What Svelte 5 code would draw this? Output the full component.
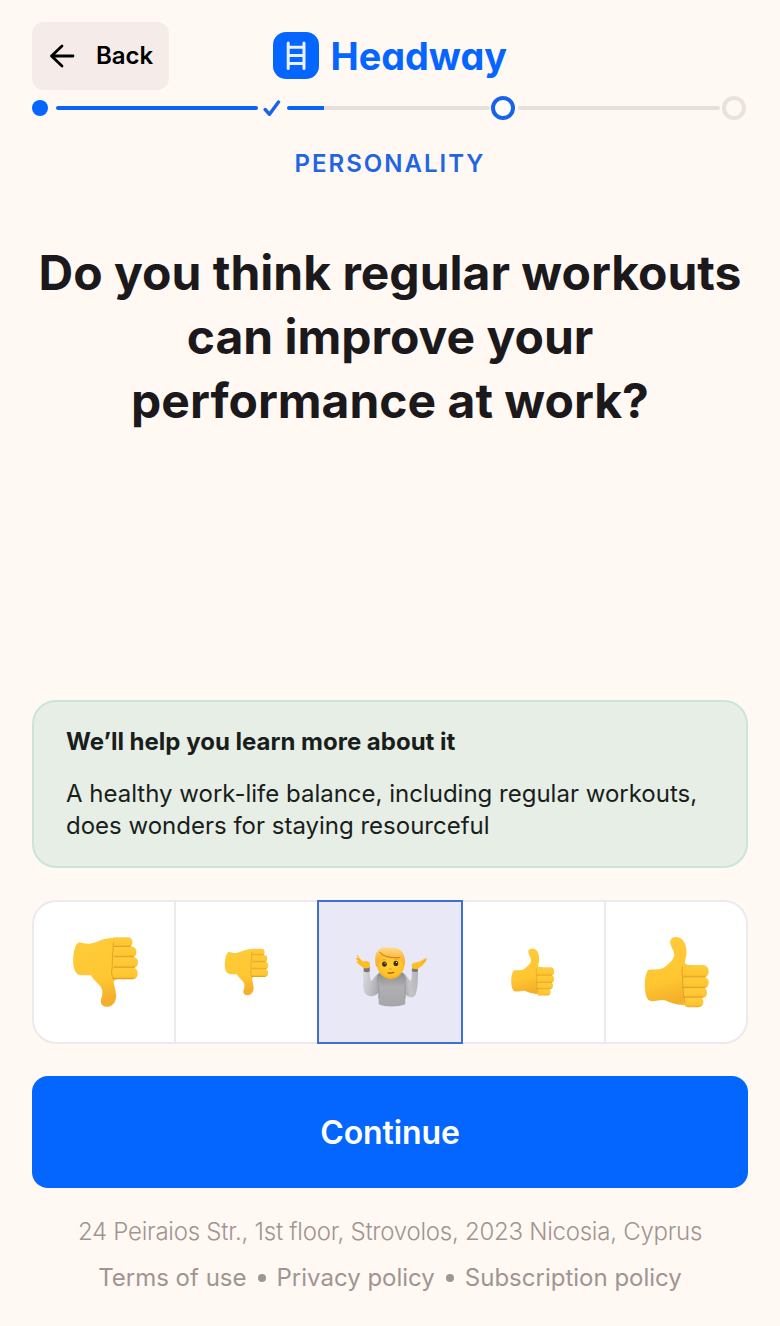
<script>
  let selected = 2;

  const answers = [
    { label: "Strongly disagree", icon: "down", size: "big" },
    { label: "Disagree", icon: "down", size: "small" },
    { label: "Not sure", icon: "shrug", size: "big" },
    { label: "Agree", icon: "up", size: "small" },
    { label: "Strongly agree", icon: "up", size: "big" },
  ];

  const links = ["Terms of use", "Privacy policy", "Subscription policy"];
</script>

<svg class="defs" width="0" height="0" aria-hidden="true">
  <defs>
    <linearGradient id="skin" x1="0" y1="0" x2="0.2" y2="1">
      <stop offset="0" stop-color="#ffcc3a" />
      <stop offset="0.7" stop-color="#ffc631" />
      <stop offset="1" stop-color="#f4b02a" />
    </linearGradient>
    <linearGradient id="finger" x1="0" y1="0" x2="0" y2="1">
      <stop offset="0" stop-color="#ffcd3d" />
      <stop offset="0.75" stop-color="#ffc530" />
      <stop offset="1" stop-color="#efac27" />
    </linearGradient>
    <radialGradient id="face" cx="0.5" cy="0.45" r="0.6">
      <stop offset="0" stop-color="#ffd23a" />
      <stop offset="0.7" stop-color="#fec22a" />
      <stop offset="1" stop-color="#f0a01a" />
    </radialGradient>
    <linearGradient id="hair" x1="0" y1="0" x2="0" y2="1">
      <stop offset="0" stop-color="#ffdc86" />
      <stop offset="0.5" stop-color="#fdbb48" />
      <stop offset="1" stop-color="#f6aa2c" />
    </linearGradient>
    <linearGradient id="shirt" x1="0" y1="0" x2="0" y2="1">
      <stop offset="0" stop-color="#88888c" />
      <stop offset="0.45" stop-color="#b0b0b3" />
      <stop offset="1" stop-color="#a6a6a8" />
    </linearGradient>
    <linearGradient id="sleeve-left" x1="0" y1="0" x2="1" y2="0.2">
      <stop offset="0" stop-color="#dcdce0" />
      <stop offset="0.5" stop-color="#bdbdc1" />
      <stop offset="1" stop-color="#98989c" />
    </linearGradient>
    <linearGradient id="sleeve-right" x1="1" y1="0" x2="0" y2="0.2">
      <stop offset="0" stop-color="#b4b4b8" />
      <stop offset="0.5" stop-color="#c4c4c8" />
      <stop offset="1" stop-color="#98989c" />
    </linearGradient>
  </defs>
</svg>

<main>
  <header>
    <button class="back">
      <svg width="26" height="26" viewBox="0 0 26 26">
        <path d="M24 13H2.500M13 3L2.500 13L13 23" />
      </svg>
      Back
    </button>
    <div class="logo">
      <svg width="236" height="56" viewBox="0 0 236 56">
        <rect x="1" y="4" width="46" height="47" rx="13" fill="#0466ff" />
        <path
          d="M16.200 15V40.500M32 15V40.500M16.200 19.200H32M16.200 27.500H32M16.200 35.500H32"
          class="ladder"
        />
        <text x="58.500" y="42" textLength="176.500" lengthAdjust="spacingAndGlyphs">Headway</text>
      </svg>
    </div>
  </header>

  <div class="progress">
    <span class="dot"></span>
    <span class="track done"></span>
    <svg class="check" width="18" height="18" viewBox="0 0 18 18">
      <path d="M2.200 10.500L6.500 15.300L15.500 3" />
    </svg>
    <span class="track"><span class="fill" style="width: 18%"></span></span>
    <span class="ring current"></span>
    <span class="track"></span>
    <span class="ring"></span>
  </div>

  <p class="category">PERSONALITY</p>
  <h1>Do you think regular workouts can improve your performance at work?</h1>

  <section class="hint">
    <h2>We’ll help you learn more about it</h2>
    <p>A healthy work-life balance, including regular workouts, does wonders for staying resourceful</p>
  </section>

  <div class="answers">
    {#each answers as answer, i}
      <button
        class="answer"
        class:active={selected === i}
        aria-label={answer.label}
        on:click={() => (selected = i)}
      >
        {#if answer.icon === "down"}
          <svg class="thumb {answer.size}" viewBox="38 36 202 216">
            <path
              d="M61 54C72 56 84 61 98 57C116 53 131 43 151 42L176 43L180 161L164 171C163 184 171 198 171 216C171 236 158 249 142 249C126 248 122 236 127 222C133 204 129 193 119 182C110 172 101 165 95 154C82 153 70 156 59 152C44 146 40 125 42 98C44 75 49 56 61 54Z"
              fill="url(#skin)"
            />
            <rect x="155" y="39" width="65" height="30" rx="13" fill="url(#finger)" />
            <rect x="155" y="67" width="77" height="33" rx="15" fill="url(#finger)" />
            <rect x="155" y="98" width="82" height="34" rx="16" fill="url(#finger)" />
            <rect x="155" y="130" width="81" height="36" rx="16" fill="url(#finger)" />
            <path d="M164 67H214M161 98H224M161 130H226M162 164H222" class="crease" />
            <path d="M153 42C145 55 151 72 149 86C147 108 153 124 150 142L164 154V43Z" fill="#ffc834" />
            <path d="M163 56C160 64 164 74 161 84C159 100 160 118 159 132C156 144 157 156 163 164" class="crease" />
          </svg>
        {:else if answer.icon === "up"}
          <svg class="thumb {answer.size}" viewBox="28 35 202 216">
            <path
              d="M43 137C58 133 73 138 87 132C102 122 119 108 122 93C124 79 109 66 110 50C112 38 125 35 137 39C153 44 161 68 159 89C158 104 151 116 157 123L178 124L176 242C151 245 116 240 97 229C81 223 66 234 49 230C31 225 28 159 43 137Z"
              fill="url(#skin)"
            />
            <rect x="145" y="122" width="81" height="38" rx="17" fill="url(#finger)" />
            <rect x="146" y="157" width="80" height="35" rx="16" fill="url(#finger)" />
            <rect x="148" y="189" width="73" height="32" rx="15" fill="url(#finger)" />
            <rect x="150" y="218" width="60" height="31" rx="14" fill="url(#finger)" />
            <path d="M151 158H214M151 190H214M153 219H207" class="crease" />
            <path d="M147 128C144 136 146 150 148 160C147 175 148 205 154 236" class="crease" />
            <path d="M150 116L172 125L166 144H149Z" fill="#ffc832" />
          </svg>
        {:else}
          <svg class="shrug" viewBox="32 48 218 182">
            <path d="M57 118L77 118C76 132 75 143 81 153C88 144 94 133 107 126L125 150L123 174C113 177 106 181 101 189C86 202 73 199 65 193C52 181 57 142 57 118Z" fill="url(#sleeve-left)" />
            <path d="M201 117L220 117C221 145 219 185 211 196C202 207 189 200 181 190L158 171V140L173 127C184 132 191 145 198 153C204 143 201 130 201 117Z" fill="url(#sleeve-right)" />
            <path d="M107 126C120 121 160 121 173 127C187 134 187 162 182 183V222C160 231 123 231 103 222L102 184C94 157 94 135 107 126Z" fill="url(#shirt)" />
            <path d="M101 165C104 181 104 189 103 205M182 166C181 182 183 190 182 205" stroke="#8c8c90" stroke-width="2" fill="none" />
            <path d="M58 111H76V124Q67 128 58 124ZM203 112H220V124Q211 127 202 123Z" fill="#77777b" />
            <path d="M36 75C42 73 44 84 51 90L55 94L67 93C75 94 78 99 76 109C75 116 59 117 54 111L38 99C33 93 39 93 43 95L35 87C33 84 37 82 43 87Z" fill="#ffbd25" />
            <path d="M245 85C250 87 241 96 237 102C234 108 224 112 220 117L204 116C199 106 202 98 211 98L224 95L242 85Z" fill="#ffbd25" />
            <path d="M38 84L48 92M244 89L231 98" stroke="#e99814" stroke-width="2" />
            <path d="M95 88C95 62 181 62 181 90C182 121 166 146 139 147C112 146 95 121 95 88Z" fill="url(#face)" />
            <path d="M95 109C90 90 91 68 103 59C111 51 123 50 132 54C155 48 176 60 179 78C182 90 181 102 178 108C174 99 172 90 168 82C146 85 124 82 111 74C108 88 101 96 101 110Z" fill="url(#hair)" />
            <path d="M106 66C114 79 140 85 167 82" stroke="#c97a1c" stroke-width="3" fill="none" />
            <ellipse cx="120" cy="102" rx="7" ry="8" fill="#4b2d14" />
            <ellipse cx="154" cy="100" rx="7" ry="8" fill="#4b2d14" />
            <circle cx="122" cy="99" r="1.800" fill="#fff" />
            <circle cx="156" cy="97" r="1.800" fill="#fff" />
            <path d="M112 91Q118 87 124 89M149 88Q156 85 162 89" stroke="#e09a24" stroke-width="2.500" fill="none" />
            <path d="M134 116Q138 118 142 116" stroke="#df9116" stroke-width="2.500" fill="none" />
            <path d="M131 128Q139 130 147 127" stroke="#a4530e" stroke-width="4" stroke-linecap="round" fill="none" />
          </svg>
        {/if}
      </button>
    {/each}
  </div>

  <button class="continue">Continue</button>

  <footer>
    <p>24 Peiraios Str., 1st floor, Strovolos, 2023 Nicosia, Cyprus</p>
    <nav>
      {#each links as link, i}
        {#if i > 0}<span class="bullet"></span>{/if}
        <span>{link}</span>
      {/each}
    </nav>
  </footer>
</main>

<style>
  :global(body) {
    margin: 0;
    background: #fff8f3;
  }

  main {
    box-sizing: border-box;
    height: 1326px;
    padding: 22px 32px 0;
    display: flex;
    flex-direction: column;
    background: #fff8f3;
    color: #1c191d;
    font-family: Inter, "Liberation Sans", sans-serif;
  }

  .defs {
    position: absolute;
  }

  button {
    padding: 0;
    border: none;
    font-family: inherit;
    cursor: pointer;
  }

  h1,
  h2,
  p {
    margin: 0;
  }

  header {
    display: grid;
    grid-template-columns: 1fr auto 1fr;
    height: 68px;
  }

  .back {
    display: flex;
    align-items: center;
    gap: 21px;
    box-sizing: border-box;
    width: 137px;
    padding: 0 0 2px 17px;
    border-radius: 12px;
    background: #f5ece9;
    color: #000;
    font-size: 24px;
    font-weight: 620;
  }

  .back svg {
    margin-top: 2px;
  }

  .back svg path {
    fill: none;
    stroke: #000;
    stroke-width: 2.8;
    stroke-linecap: round;
    stroke-linejoin: round;
  }

  .logo {
    padding-top: 6px;
  }

  .logo svg {
    display: block;
    overflow: visible;
  }

  .logo text {
    fill: #0466ff;
    font-size: 38.500px;
    font-weight: 750;
    font-feature-settings: "cv11";
  }

  .ladder {
    fill: none;
    stroke: #eaf1ff;
    stroke-width: 3;
    stroke-linecap: round;
  }

  .progress {
    display: flex;
    align-items: center;
    height: 24px;
    margin: 6px 2px 0 0;
  }

  .dot {
    width: 16px;
    height: 16px;
    margin-right: 8px;
    border-radius: 50%;
    background: #0466ff;
  }

  .track {
    flex: 1;
    height: 4px;
    border-radius: 2px;
    background: #e7dfdb;
    overflow: hidden;
  }

  .track.done,
  .fill {
    background: #0a63f5;
  }

  .fill {
    display: block;
    height: 4px;
  }

  .check {
    margin: 0 6px 0 5px;
  }

  .check path {
    fill: none;
    stroke: #1a62ea;
    stroke-width: 3.4;
    stroke-linecap: round;
    stroke-linejoin: round;
  }

  .ring {
    box-sizing: border-box;
    width: 24px;
    height: 24px;
    margin-left: 2px;
    border: 4px solid #e9e2de;
    border-radius: 50%;
  }

  .ring.current {
    margin: 0 3px 0 1px;
    border-color: #1763eb;
    background: #fffdfc;
  }

  .category {
    margin-top: 28px;
    color: #2164e4;
    font-size: 24px;
    font-weight: 600;
    line-height: 32px;
    letter-spacing: 2px;
    text-align: center;
  }

  h1 {
    margin-top: 61px;
    font-size: 48px;
    font-weight: 700;
    line-height: 64px;
    text-align: center;
  }

  .hint {
    box-sizing: border-box;
    height: 168px;
    margin-top: auto;
    padding: 24px 32px;
    border: 2px solid #cce4d9;
    border-radius: 24px;
    background: #e6eee6;
    color: #191d1b;
  }

  .hint h2 {
    font-size: 24px;
    font-weight: 700;
    line-height: 32px;
  }

  .hint p {
    margin-top: 20px;
    font-size: 24px;
    line-height: 32px;
  }

  .answers {
    display: grid;
    grid-template-columns: repeat(5, 1fr);
    height: 144px;
    margin-top: 32px;
  }

  .answer {
    display: flex;
    align-items: center;
    justify-content: center;
    box-sizing: border-box;
    margin-left: -1px;
    border: 2px solid #ede9ee;
    border-right-width: 0;
    background: #fff;
  }

  .answer:first-child {
    margin-left: 0;
    border-radius: 24px 0 0 24px;
  }

  .answer:last-child {
    border-right-width: 2px;
    border-radius: 0 24px 24px 0;
  }

  .answer.active {
    z-index: 1;
    margin-right: -1px;
    border: 2px solid #3c70d4;
    background: #e8e8f7;
  }

  .thumb.big {
    width: 67px;
    height: 72px;
    margin-left: 2px;
  }

  .thumb.small {
    width: 45px;
    height: 48px;
    margin: 0 2px 0 0;
  }

  .crease {
    fill: none;
    stroke: #dc9a28;
    stroke-width: 2.500;
    stroke-linecap: round;
  }

  .shrug {
    width: 73px;
    height: 61px;
    margin: 8px 0 0 3px;
  }

  .continue {
    height: 112px;
    margin-top: 32px;
    border-radius: 16px;
    background: #0466ff;
    color: #fff;
    font-size: 32px;
    font-weight: 620;
    letter-spacing: -0.1px;
  }

  footer {
    padding: 28px 0 32px;
    color: #9f9592;
    font-size: 24px;
    line-height: 32px;
    text-align: center;
  }

  footer p {
    font-weight: 340;
    letter-spacing: -0.25px;
  }

  nav {
    display: flex;
    align-items: center;
    justify-content: center;
    gap: 11px;
    margin-top: 14px;
  }

  .bullet {
    width: 8px;
    height: 8px;
    border-radius: 50%;
    background: #9f9592;
  }
</style>
